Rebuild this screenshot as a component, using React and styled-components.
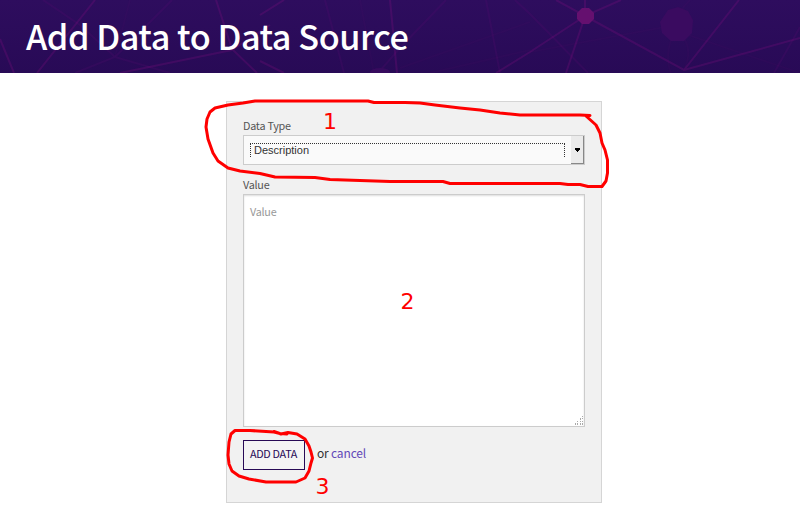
import React from "react";
import styled, { createGlobalStyle } from "styled-components";

const GlobalStyle = createGlobalStyle`
  * { box-sizing: border-box; }
  body { margin: 0; background: #fff; overflow: hidden; font-family: "Noto Sans CJK SC", "Noto Sans", sans-serif; }
`;

const Page = styled.div`
  position: relative;
  width: 800px;
  height: 525px;
  overflow: hidden;
`;

const Header = styled.header`
  position: relative;
  height: 73px;
  padding: 0 0 4px 26px;
  display: flex;
  align-items: center;
  background: linear-gradient(#2e0d5e, #280a56);
`;

const Mesh = styled.svg`
  position: absolute;
  inset: 0;
  fill: none;
`;

const Title = styled.h1`
  position: relative;
  margin: 0;
  color: #fff;
  font-size: 34.2px;
  font-weight: 500;
  letter-spacing: -0.44px;
  line-height: 50px;
  white-space: nowrap;
`;

const Panel = styled.form`
  width: 376px;
  height: 402px;
  margin: 28px 0 0 226px;
  padding: 14px 16px 16px;
  display: flex;
  flex-direction: column;
  background: #f1f1f1;
  border: 1px solid #d5d5d5;
`;

const Label = styled.label`
  height: 19px;
  color: #555;
  font-size: 10.8px;
  letter-spacing: -0.25px;
  line-height: 18px;
`;

const SelectBox = styled.div`
  height: 30px;
  margin-bottom: 10px;
  display: flex;
  justify-content: space-between;
  background: #fafafa;
  border: 1px solid #ccc;
`;

const SelectValue = styled.div`
  width: 315px;
  height: 14px;
  margin: 7px 0 0 6px;
  padding-left: 3px;
  border: 1px dotted #333;
  border-bottom: 0;
  color: #333;
  font: 11px/12px "Liberation Sans", sans-serif;
`;

const SelectArrow = styled.div`
  width: 13px;
  height: 28px;
  display: flex;
  align-items: center;
  justify-content: center;
  background: #ebebeb;
  border-right: 1px solid #888;
  border-bottom: 1px solid #888;
`;

const ValueBox = styled.div`
  height: 233px;
  padding: 7px 6px 8px;
  display: flex;
  justify-content: space-between;
  background: #fff;
  border: 1px solid #ccc;
  box-shadow: inset 0 1px 2px #ddd;
  color: #999;
  font-size: 10.8px;
  letter-spacing: -0.25px;
  line-height: 18px;
`;

const Grip = styled.svg`
  align-self: flex-end;
  margin: 0 -6px -8px 0;
`;

const Actions = styled.div`
  display: flex;
  align-items: flex-start;
  margin-top: 13px;
  color: #333;
  font-size: 12px;
  letter-spacing: -0.15px;
  line-height: 25px;
`;

const AddButton = styled.button`
  width: 62px;
  height: 30px;
  margin-right: 12px;
  padding: 0 1px 4px 0;
  background: #f4f4f4;
  border: 1px solid #280a56;
  color: #280a56;
  font-family: inherit;
  font-size: 10.8px;
  letter-spacing: -0.3px;
  line-height: 24px;
  white-space: nowrap;
`;

const CancelLink = styled.a`
  margin-left: 2.4px;
  color: #6248b8;
`;

const Markup = styled.svg`
  position: absolute;
  inset: 0;
  fill: none;
  stroke: #f00;
  stroke-width: 3;
  stroke-linecap: round;
  stroke-linejoin: round;
`;

const Marker = styled.span`
  position: absolute;
  left: ${(p) => p.$x}px;
  top: ${(p) => p.$y}px;
  color: #f00;
  font: 22px/26px "DejaVu Sans", sans-serif;
`;

const gripDots = [[8, 0], [6, 2], [8, 2], [6, 3], [3, 5], [6, 5], [8, 5], [1, 7], [3, 7], [6, 7], [8, 7], [1, 8], [3, 8], [6, 8], [8, 8]];

export default function App() {
  return (
    <Page>
      <GlobalStyle />
      <Header>
        <Mesh width="800" height="73" stroke="#a00f8c" strokeWidth="2">
          <g opacity=".2">
            <path d="M95 0L37 73M216 0L232 49L257 73M232 50L120 73M232 50L270 25M390 0L397 73M0 39L14 73M260 15L284 0M260 61L284 73" />
            <path d="M556 0L585 16L621 0M585 0V16L566 73M585 16L530 52L496 73M585 16L684 70L739 0M684 70L800 38" />
          </g>
          <g opacity=".09">
            <path d="M43 0L80 25L115 57L75 73M115 57L172 0M115 57L170 73M325 0L344 73M446 0L400 48L378 73M486 0L500 73M515 0L530 14L588 73M800 27L774 73" />
          </g>
          <g opacity=".04">
            <path d="M115 57L130 0M530 52L665 27L800 73M665 27L690 0M671 40Q665 60 671 73M685 40Q692 53 684 70M400 68L530 22M430 73L530 50M360 0L374 73" />
          </g>
          <path d="M582 8h7l5 5v6l-5 5h-7l-5-5v-6z" fill="#65106f" stroke="none" />
          <path d="M668 10l10-3 10 4 5 9-1 13-8 8h-13l-9-8-2-11z" fill="#3a0b60" stroke="none" />
          <ellipse cx="380" cy="72" rx="10" ry="4" fill="#370b5e" stroke="none" />
        </Mesh>
        <Title>Add Data to Data Source</Title>
      </Header>
      <Panel>
        <Label>Data Type</Label>
        <SelectBox>
          <SelectValue>Description</SelectValue>
          <SelectArrow>
            <svg width="5" height="4"><path d="M0 0h5v2h-1v1h-1v1h-1v-1h-1v-1h-1z" fill="#000" /></svg>
          </SelectArrow>
        </SelectBox>
        <Label>Value</Label>
        <ValueBox>
          Value
          <Grip width="10" height="10">
            {gripDots.map(([x, y]) => <rect key={`${x}-${y}`} x={x} y={y} width="1" height="1" fill="#aaa" />)}
          </Grip>
        </ValueBox>
        <Actions>
          <AddButton type="button">ADD DATA</AddButton>
          <span>or</span>
          <CancelLink>cancel</CancelLink>
        </Actions>
      </Panel>
      <Markup width="800" height="525">
        <path d="M590 115.500L580 115H520L500 113L480 110L460 108L435 105L420 103L405 102.500H374L368 101H255L243 103L228 105L215 108L210 112L207 119L206 127L208 139L213 153L218 161L228 168L240 171L260 173.500L275 177L315 177.500L330 179.500L390 181.500H443L450 183.500H560L568 184.500H580L588 186.500H602L606 181L607.500 173V160L605 150L602 143L600 133L596 125L586 116" />
        <path d="M287 434L280 433.500L274 432L250 430.500H235L231 434L229 442L228 455L229 464L232 471L239 476L249 479L266 482H296L305 478L309 471L311 463L312.500 458L311 452L309 446L305 439L297 434L288 432.500L281 434L274 431.500" />
      </Markup>
      <Marker $x={323} $y={109}>1</Marker>
      <Marker $x={400.5} $y={289}>2</Marker>
      <Marker $x={315.5} $y={474}>3</Marker>
    </Page>
  );
}
